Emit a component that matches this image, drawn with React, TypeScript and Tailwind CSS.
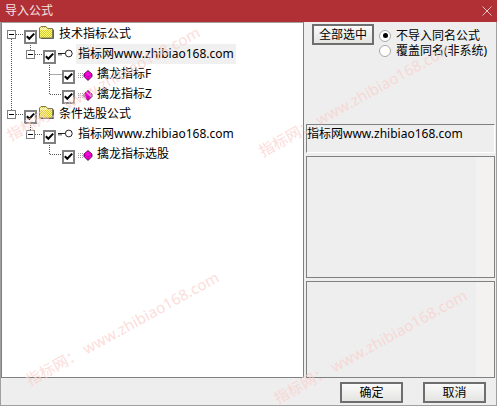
import React from "react";

const font = { fontFamily: '"Noto Sans", "Noto Sans CJK SC", sans-serif' };

function Check() {
  return (
    <span className="mt-[5px] flex h-[14px] w-[13px] shrink-0 items-center justify-center border-2 border-[#808080] bg-white">
      <svg width="9" height="9" viewBox="0 0 9 9">
        <path d="M0.8 4.2 L3.3 6.8 L8.2 1.6" fill="none" stroke="#000" strokeWidth="2" />
      </svg>
    </span>
  );
}

function Expander() {
  return (
    <span className="mr-2 flex h-[9px] w-[9px] shrink-0 items-center justify-center border border-[#808080] bg-white">
      <span className="h-px w-[5px] bg-black" />
    </span>
  );
}

function Folder() {
  return (
    <svg width="15" height="13" viewBox="0 0 15 13" className="-mt-[3px] ml-[2px] shrink-0">
      <defs>
        <pattern id="chk" width="2" height="2" patternUnits="userSpaceOnUse">
          <rect width="2" height="2" fill="#ffff66" />
          <rect width="1" height="1" fill="#d8c840" />
          <rect x="1" y="1" width="1" height="1" fill="#d8c840" />
        </pattern>
      </defs>
      <path d="M0.5 12 V2 L2 0.5 H7 L8.5 2.5 H13.5 V12 Z" fill="url(#chk)" stroke="#807850" />
      <path d="M1 3 H8" stroke="#fff" />
      <path d="M14.5 3.5 V12.5 H2" fill="none" stroke="#606060" />
    </svg>
  );
}

function KeyIcon() {
  return (
    <svg width="15" height="9" viewBox="0 0 15 9" className="-mt-[2px] ml-[2px] shrink-0">
      <circle cx="10.8" cy="4.5" r="3.4" fill="#fff" stroke="#222" />
      <path d="M0 4.5 H7.5 M1 6.5 V4.5 M3 6.5 V4.5" stroke="#222" fill="none" />
    </svg>
  );
}

function Gem() {
  return (
    <svg width="15" height="11" viewBox="0 0 15 11" className="mt-[2px] ml-[3px] shrink-0">
      <path d="M0 3.5 H5 M0 5.5 H5 M0 7.5 H5" stroke="#a0a0a0" strokeDasharray="1 1" />
      <path d="M10 0.5 L14 4 V6.5 L10 10.5 L6 6.5 V4 Z" fill="#ff00e0" stroke="#300030" strokeWidth="0.8" />
      <path d="M6 4.5 L10 7 L14 4.5 M10 7 V10" fill="none" stroke="#900090" strokeWidth="0.7" />
    </svg>
  );
}

function Row({ indent, icon, label, expander, selected }: { indent: string; icon: React.ReactNode; label: string; expander?: boolean; selected?: boolean }) {
  return (
    <div className={`flex h-5 items-center ${indent}`}>
      {expander && <Expander />}
      <Check />
      <span className="flex w-5 shrink-0 items-center">{icon}</span>
      <span className={`flex h-5 items-center whitespace-nowrap px-[2px] ${selected ? "bg-[#f0f0f0]" : ""}`}>{label}</span>
    </div>
  );
}

function Mark({ className }: { className: string }) {
  return (
    <div
      className={`pointer-events-none absolute origin-left -rotate-[29deg] whitespace-nowrap text-[15px] tracking-[0.2px] text-[#fbd0cc] opacity-70 ${className}`}
    >
      指标网： www.zhibiao168.com
    </div>
  );
}

function Radio({ on, label }: { on?: boolean; label: string }) {
  return (
    <div className="flex h-[15px] items-center gap-[5px]">
      <span className="flex h-3 w-3 items-center justify-center rounded-full border border-[#a8a8a8] bg-white">
        {on && <span className="h-[5px] w-[5px] rounded-full bg-black" />}
      </span>
      <span className="whitespace-nowrap">{label}</span>
    </div>
  );
}

function WinButton({ label, className }: { label: string; className: string }) {
  return (
    <button className={`flex items-center justify-center border-2 border-[#6e6e6e] bg-gradient-to-b from-[#fafafa] to-[#e4e4e2] text-black ${className}`}>
      {label}
    </button>
  );
}

function PreviewBox({ className }: { className: string }) {
  return (
    <div className={`flex shrink-0 border border-[#808080] ${className}`}>
      <div className="flex-1" />
      <div className="w-[18px] bg-[#f3f2f0]" />
    </div>
  );
}

export default function App() {
  return (
    <div style={font} className="relative flex h-[406px] w-[497px] flex-col overflow-hidden bg-[#eeeeee] text-[12px] text-black">
      <div className="flex h-[22px] shrink-0 items-center justify-between bg-[#b03035] pl-[5px] pr-[5px] text-[12px] text-[#f6e4e4]">
        <span>导入公式</span>
        <svg width="10" height="10" viewBox="0 0 10 10">
          <path d="M0.5 0.5 L9.5 9.5 M9.5 0.5 L0.5 9.5" stroke="#e8c4c6" fill="none" />
        </svg>
      </div>

      <div className="flex h-[356px] shrink-0 border-x border-[#a0a0a0]">
        <div className="relative h-[356px] w-[303px] shrink-0 border border-l-[#808080] border-t-[#a0a0a0] border-r-[#808080] border-b-[#808080] bg-white pt-px">
          <svg className="absolute left-0 top-0" width="80" height="180" fill="none" stroke="#555" strokeDasharray="1 1">
            <path d="M14 11.5 H22 M9.5 16 V87" />
            <path d="M28.5 20 V27 M33 31.5 H41 M47.5 40 V71.5 H60 M47.5 51.5 H60" />
            <path d="M14 91.5 H22 M28.5 100 V107 M33 111.5 H41 M47.5 120 V131.5 H60" />
          </svg>
          <div className="relative">
            <Row indent="pl-[5px]" expander icon={<Folder />} label="技术指标公式" />
            <Row indent="pl-[24px]" expander icon={<KeyIcon />} label="指标网www.zhibiao168.com" selected />
            <Row indent="pl-[60px]" icon={<Gem />} label="擒龙指标F" />
            <Row indent="pl-[60px]" icon={<Gem />} label="擒龙指标Z" />
            <Row indent="pl-[5px]" expander icon={<Folder />} label="条件选股公式" />
            <Row indent="pl-[24px]" expander icon={<KeyIcon />} label="指标网www.zhibiao168.com" />
            <Row indent="pl-[60px]" icon={<Gem />} label="擒龙指标选股" />
          </div>
        </div>

        <div className="flex min-w-0 flex-1 flex-col pl-[2px] pr-px">
          <div className="flex h-[102px] shrink-0 items-start pl-[6px] pt-[2px]">
            <WinButton label="全部选中" className="h-[21px] w-[62px]" />
            <div className="ml-[5px] flex flex-col pt-[4px]">
              <Radio on label="不导入同名公式" />
              <Radio label="覆盖同名(非系统)" />
            </div>
          </div>
          <div className="h-[29px] shrink-0 border border-[#808080] border-b-white border-r-white">
            <div className="h-[18px] whitespace-nowrap leading-[18px]">指标网www.zhibiao168.com</div>
          </div>
          <PreviewBox className="mt-[3px] h-[122px]" />
          <PreviewBox className="mt-[3px] h-[97px]" />
        </div>
      </div>

      <div className="flex h-[28px] shrink-0 items-start justify-end gap-5 border-x border-b border-[#a0a0a0] pr-[10px] pt-[4px]">
        <WinButton label="确定" className="h-[21px] w-[63px]" />
        <WinButton label="取消" className="h-[21px] w-[63px]" />
      </div>

      <Mark className="left-[27px] top-[370px]" />
      <Mark className="left-[275px] top-[388px]" />
      <Mark className="left-[8px] top-[125px]" />
      <Mark className="left-[260px] top-[141px]" />
    </div>
  );
}
